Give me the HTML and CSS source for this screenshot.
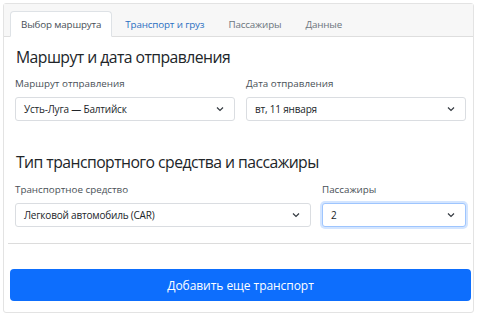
FILE: index.html
```html
<!DOCTYPE html>
<html lang="ru">
<head>
<meta charset="utf-8">
<title>Выбор маршрута</title>
<link rel="stylesheet" href="styles.css">
</head>
<body>
<div class="card">
  <div class="card-header">
    <ul class="tabs">
      <li class="tab active">Выбор маршрута</li>
      <li class="tab link">Транспорт и груз</li>
      <li class="tab disabled">Пассажиры</li>
      <li class="tab disabled">Данные</li>
    </ul>
  </div>
  <div class="card-body">
    <h4 class="title first">Маршрут и дата отправления</h4>
    <div class="row half">
      <div class="field">
        <label class="label">Маршрут отправления</label>
        <div class="select"><span>Усть-Луга — Балтийск</span><svg class="chev" width="8" height="6" viewBox="0 0 8 6"><path d="M1 1.5l3 3 3-3" fill="none" stroke="#343a40" stroke-width="1.2"/></svg></div>
      </div>
      <div class="field">
        <label class="label">Дата отправления</label>
        <div class="select"><span>вт, 11 января</span><svg class="chev" width="8" height="6" viewBox="0 0 8 6"><path d="M1 1.5l3 3 3-3" fill="none" stroke="#343a40" stroke-width="1.2"/></svg></div>
      </div>
    </div>
    <h4 class="title second">Тип транспортного средства и пассажиры</h4>
    <div class="row wide">
      <div class="field">
        <label class="label label2">Транспортное средство</label>
        <div class="select"><span>Легковой автомобиль (CAR)</span><svg class="chev" width="8" height="6" viewBox="0 0 8 6"><path d="M1 1.5l3 3 3-3" fill="none" stroke="#343a40" stroke-width="1.2"/></svg></div>
      </div>
      <div class="field">
        <label class="label label2">Пассажиры</label>
        <div class="select focus"><span>2</span><svg class="chev" width="8" height="6" viewBox="0 0 8 6"><path d="M1 1.5l3 3 3-3" fill="none" stroke="#343a40" stroke-width="1.2"/></svg></div>
      </div>
    </div>
    <hr class="divider">
    <button class="btn">Добавить еще транспорт</button>
  </div>
</div>
</body>
</html>
```
FILE: styles.css
```css
* { box-sizing: border-box; }
html, body { margin: 0; padding: 0; background: #fff; }
body {
  font-family: "Open Sans", "Noto Sans", sans-serif;
  color: #212529;
  padding: 3px 6px 3px 3px;
}
.card {
  width: 471px;
  height: 310px;
  border: 1px solid #e3e3e3;
  border-radius: 3px;
  background: #fff;
  display: flex;
  flex-direction: column;
}
.card-header {
  height: 33px;
  background: #f7f7f7;
  border-bottom: 1px solid #dedede;
  padding: 6px 6px 0 6px;
  display: flex;
  align-items: flex-end;
}
.tabs {
  list-style: none;
  margin: 0 0 -1px 0;
  padding: 0;
  display: flex;
}
.tab {
  height: 26px;
  padding: 0 10px;
  margin-right: 2px;
  font-size: 9.8px;
  letter-spacing: -0.15px;
  line-height: 26px;
  border: 1px solid transparent;
  border-radius: 4px 4px 0 0;
}
.tab.active {
  background: #fff;
  color: #495057;
  border-color: #dee2e6 #dee2e6 #fff;
}
.tab.link { color: #2b6fc2; }
.tab.disabled { color: #6c757d; }
.card-body {
  padding: 0 2px 0 6px;
  flex: 1;
}
.title {
  margin: 0;
  padding: 0 5px 0 6px;
  font-size: 15.75px;
  letter-spacing: -0.55px;
  line-height: 23px;
  font-weight: 500;
  color: #212529;
}
.title.first { margin-top: 9px; }
.title.second { margin-top: 30px; }
.row {
  display: grid;
  column-gap: 11px;
  padding: 0 5px;
}
.row.half { grid-template-columns: 1fr 1fr; }
.row.wide { grid-template-columns: 296px 1fr; }
.field { display: flex; flex-direction: column; }
.label {
  display: block;
  margin-top: 7px;
  margin-bottom: 5px;
  font-size: 9.8px;
  line-height: 16px;
  color: #495057;
}
.label2 { margin-top: 8px; }
.select {
  height: 24px;
  border: 1px solid #dadde1;
  border-radius: 3px;
  padding: 0 10px 0 8px;
  display: flex;
  align-items: center;
  justify-content: space-between;
  font-size: 10px;
  letter-spacing: -0.2px;
  color: #212529;
  background: #fff;
}
.select.focus {
  border-color: #9ec5fe;
  box-shadow: 0 0 0 2px rgba(13, 110, 253, 0.18);
}
.chev { flex: none; }
.divider {
  margin: 16px 0 0 -2px;
  border: 0;
  border-top: 1px solid #dcdcdc;
}
.btn {
  display: block;
  width: 100%;
  height: 32px;
  margin-top: 25px;
  border: 0;
  border-radius: 4px;
  background: #0d6efd;
  color: #fff;
  font-family: "Open Sans", "Noto Sans", sans-serif;
  font-size: 12px;
  letter-spacing: -0.05px;
  cursor: pointer;
}
```
